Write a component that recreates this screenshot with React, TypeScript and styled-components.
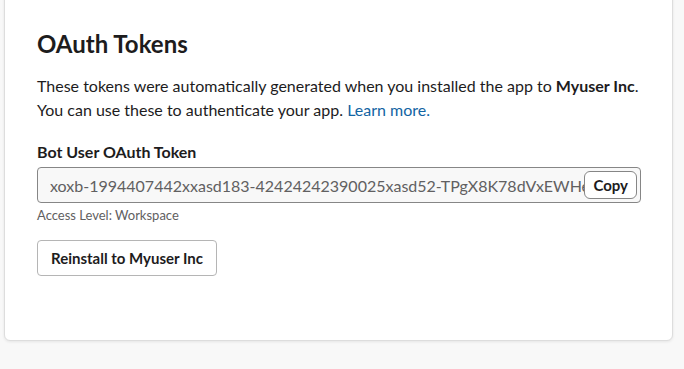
import styled, { createGlobalStyle } from "styled-components"

const GlobalStyle = createGlobalStyle`
    html, body {
        margin: 0;
        padding: 0;
        background: #f8f8f8;
        font-family: Lato, "Noto Sans", sans-serif;
        color: #1d1c1d;
    }
`

const Page = styled.div`
    padding: 0 11px 29px 4px;
`

const Card = styled.section`
    margin-top: -6px;
    background: #fff;
    border: 1px solid #dddddd;
    border-radius: 0 0 6px 6px;
    box-shadow: 0 1px 3px rgba(0, 0, 0, 0.08);
    padding: 34px 32px 64px;
`

const Title = styled.h2`
    margin: 0 0 15px;
    font-size: 24px;
    line-height: 30px;
    font-weight: 700;
`

const Lead = styled.p`
    margin: 0 0 19px;
    font-size: 16px;
    line-height: 24px;

    b {
        font-weight: 700;
    }

    a {
        color: #1264a3;
        text-decoration: none;
    }
`

const FieldLabel = styled.label`
    display: block;
    font-size: 16px;
    line-height: 22px;
    font-weight: 700;
    margin-bottom: 4px;
`

const TokenBox = styled.div`
    display: flex;
    align-items: center;
    width: 604px;
    height: 36px;
    box-sizing: border-box;
    border: 1px solid #868686;
    border-radius: 4px;
    background: #f8f8f8;
    padding: 0 3px 0 12px;
    overflow: hidden;
`

const TokenText = styled.span`
    flex: 1;
    min-width: 0;
    white-space: nowrap;
    overflow: hidden;
    font-size: 16px;
    color: #616061;
`

const CopyButton = styled.button`
    flex: none;
    height: 28px;
    padding: 0 8px;
    border: 1px solid #868686;
    border-radius: 6px;
    background: #fff;
    font-family: inherit;
    font-size: 15px;
    font-weight: 700;
    color: #1d1c1d;
`

const Hint = styled.div`
    margin-top: 3px;
    font-size: 13px;
    line-height: 18px;
    color: #616061;
`

const Button = styled.button`
    margin-top: 16px;
    height: 36px;
    padding: 0 13px;
    border: 1px solid #b5b5b5;
    border-radius: 4px;
    background: #fff;
    font-family: inherit;
    font-size: 15px;
    font-weight: 700;
    color: #1d1c1d;
`

export default function App() {
    return (
        <Page>
            <GlobalStyle />
            <Card>
                <Title>OAuth Tokens</Title>
                <Lead>
                    These tokens were automatically generated when you installed the app to <b>Myuser Inc</b>.
                    <br />
                    You can use these to authenticate your app. <a href="#">Learn more.</a>
                </Lead>
                <FieldLabel>Bot User OAuth Token</FieldLabel>
                <TokenBox>
                    <TokenText>xoxb-1994407442xxasd183-42424242390025xasd52-TPgX8K78dVxEWHeQ3sZ7</TokenText>
                    <CopyButton>Copy</CopyButton>
                </TokenBox>
                <Hint>Access Level: Workspace</Hint>
                <Button>Reinstall to Myuser Inc</Button>
            </Card>
        </Page>
    )
}
